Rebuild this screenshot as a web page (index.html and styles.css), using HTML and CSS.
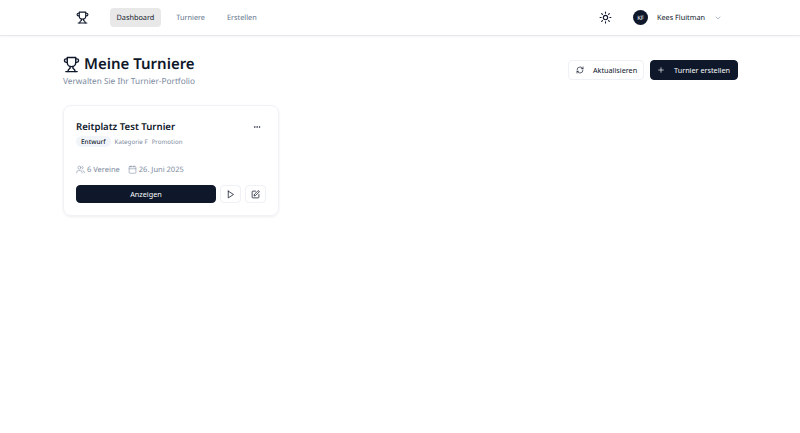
FILE: index.html
```html
<!DOCTYPE html>
<html lang="de">
<head>
<meta charset="utf-8">
<title>Meine Turniere</title>
<link rel="stylesheet" href="styles.css">
</head>
<body>
<header class="topbar">
  <div class="topbar-left">
    <svg class="icon logo" viewBox="0 0 24 24"><path d="M6 9H4.5a2.5 2.5 0 0 1 0-5H6"/><path d="M18 9h1.5a2.5 2.5 0 0 0 0-5H18"/><path d="M4 22h16"/><path d="M10 14.66V17c0 .55-.47.98-.97 1.21C7.85 18.75 7 20.24 7 22"/><path d="M14 14.66V17c0 .55.47.98.97 1.21C16.15 18.75 17 20.24 17 22"/><path d="M18 2H6v7a6 6 0 0 0 12 0V2Z"/></svg>
    <nav class="nav">
      <a class="nav-link active">Dashboard</a>
      <a class="nav-link">Turniere</a>
      <a class="nav-link">Erstellen</a>
    </nav>
  </div>
  <div class="topbar-right">
    <svg class="icon sun" viewBox="0 0 24 24"><circle cx="12" cy="12" r="4"/><path d="M12 2v2M12 20v2M4.93 4.93l1.41 1.41M17.66 17.66l1.41 1.41M2 12h2M20 12h2M6.34 17.66l-1.41 1.41M19.07 4.93l-1.41 1.41"/></svg>
    <div class="user">
      <span class="avatar">KF</span>
      <span class="user-name">Kees Fluitman</span>
      <svg class="icon chevron" viewBox="0 0 24 24"><path d="m6 9 6 6 6-6"/></svg>
    </div>
  </div>
</header>
<main class="page">
  <div class="page-head">
    <div>
      <h1 class="title">
        <svg class="icon title-icon" viewBox="0 0 24 24"><path d="M6 9H4.5a2.5 2.5 0 0 1 0-5H6"/><path d="M18 9h1.5a2.5 2.5 0 0 0 0-5H18"/><path d="M4 22h16"/><path d="M10 14.66V17c0 .55-.47.98-.97 1.21C7.85 18.75 7 20.24 7 22"/><path d="M14 14.66V17c0 .55.47.98.97 1.21C16.15 18.75 17 20.24 17 22"/><path d="M18 2H6v7a6 6 0 0 0 12 0V2Z"/></svg>
        Meine Turniere
      </h1>
      <p class="subtitle">Verwalten Sie Ihr Turnier-Portfolio</p>
    </div>
    <div class="head-actions">
      <button class="btn btn-outline btn-refresh">
        <svg class="icon btn-icon" viewBox="0 0 24 24"><path d="M3 12a9 9 0 0 1 9-9 9.75 9.75 0 0 1 6.74 2.74L21 8"/><path d="M21 3v5h-5"/><path d="M21 12a9 9 0 0 1-9 9 9.75 9.75 0 0 1-6.74-2.74L3 16"/><path d="M8 16H3v5"/></svg>
        Aktualisieren
      </button>
      <button class="btn btn-dark btn-create">
        <svg class="icon btn-icon" viewBox="0 0 24 24"><path d="M5 12h14M12 5v14"/></svg>
        Turnier erstellen
      </button>
    </div>
  </div>
  <section class="card">
    <div class="card-top">
      <h2 class="card-title">Reitplatz Test Turnier</h2>
      <svg class="icon more" viewBox="0 0 24 24"><circle cx="12" cy="12" r="1"/><circle cx="19" cy="12" r="1"/><circle cx="5" cy="12" r="1"/></svg>
    </div>
    <div class="tags">
      <span class="badge">Entwurf</span>
      <span class="tag">Kategorie F</span>
      <span class="tag">Promotion</span>
    </div>
    <div class="meta">
      <span class="meta-item">
        <svg class="icon meta-icon" viewBox="0 0 24 24"><path d="M16 21v-2a4 4 0 0 0-4-4H6a4 4 0 0 0-4 4v2"/><circle cx="9" cy="7" r="4"/><path d="M22 21v-2a4 4 0 0 0-3-3.87"/><path d="M16 3.13a4 4 0 0 1 0 7.75"/></svg>
        6 Vereine
      </span>
      <span class="meta-item">
        <svg class="icon meta-icon" viewBox="0 0 24 24"><rect x="3" y="4" width="18" height="18" rx="2"/><path d="M16 2v4M8 2v4M3 10h18"/></svg>
        26. Juni 2025
      </span>
    </div>
    <div class="card-actions">
      <button class="btn btn-dark btn-wide">Anzeigen</button>
      <button class="btn btn-outline btn-square">
        <svg class="icon square-icon" viewBox="0 0 24 24"><polygon points="6 3 20 12 6 21 6 3"/></svg>
      </button>
      <button class="btn btn-outline btn-square">
        <svg class="icon square-icon" viewBox="0 0 24 24"><path d="M12 3H5a2 2 0 0 0-2 2v14a2 2 0 0 0 2 2h14a2 2 0 0 0 2-2v-7"/><path d="M18.375 2.625a2.121 2.121 0 1 1 3 3L12 15l-4 1 1-4Z"/></svg>
      </button>
    </div>
  </section>
</main>
</body>
</html>
```
FILE: styles.css
```css
* { box-sizing: border-box; }
html, body { margin: 0; padding: 0; }
body {
  background: #fff;
  color: #0f172a;
  font-family: "Noto Sans", "Open Sans", sans-serif;
  text-rendering: geometricPrecision;
  white-space: nowrap;
  height: 433px;
  overflow: hidden;
}
.icon {
  fill: none;
  stroke: currentColor;
  stroke-width: 2;
  stroke-linecap: round;
  stroke-linejoin: round;
  flex: none;
  display: block;
}
.topbar {
  height: 36px;
  padding: 0 78px 0 76px;
  border-bottom: 1px solid #e5e7eb;
  box-shadow: 0 1px 2px rgba(0,0,0,.04);
  display: flex;
  align-items: center;
  justify-content: space-between;
}
.topbar-left { display: flex; align-items: center; gap: 21px; }
.logo { width: 13px; height: 13px; }
.nav { display: flex; align-items: center; gap: 9px; }
.nav-link {
  font-size: 7.3px;
  line-height: 18px;
  padding: 1px 6.5px 0;
  border-radius: 4px;
  color: #64748b;
}
.nav-link.active { background: #e8e8e9; color: #0f172a; }
.topbar-right { display: flex; align-items: center; gap: 21px; }
.sun { width: 13px; height: 13px; }
.user { display: flex; align-items: center; }
.avatar {
  width: 15px; height: 15px;
  border-radius: 50%;
  background: #0f172a;
  color: #f8fafc;
  font-size: 6px;
  display: flex; align-items: center; justify-content: center;
}
.user-name { font-size: 7.25px; margin-left: 9px; color: #0f172a; }
.chevron { width: 8px; height: 8px; margin-left: 9px; color: #64748b; stroke-width: 1.5; }
.page { padding: 16px 62px 0 63px; }
.page-head {
  display: flex;
  justify-content: space-between;
  align-items: center;
  margin-bottom: 17px;
}
.title {
  margin: 0;
  font-size: 15px;
  font-weight: 600;
  line-height: 24px;
  display: flex;
  align-items: center;
  gap: 4px;
}
.title-icon { width: 17px; height: 17px; }
.subtitle { margin: 0; font-size: 8.25px; line-height: 12px; color: #7c8aa0; }
.head-actions { display: flex; gap: 6px; }
.btn {
  font-family: inherit;
  font-size: 7.25px;
  height: 20px;
  border-radius: 4px;
  border: 1px solid #eef1f5;
  display: inline-flex;
  align-items: center;
  justify-content: center;
  gap: 9px;
  cursor: pointer;
}
.btn-refresh { width: 76px; padding: 0 6px 0 7px; }
.btn-create { width: 88px; padding: 0 7px 0 6px; }
.btn-outline { background: #fff; color: #0f172a; }
.btn-dark { background: #0f172a; color: #f8fafc; border-color: #0f172a; }
.btn-icon { width: 8px; height: 8px; }
.card {
  width: 216px;
  height: 111px;
  border: 1px solid #f0f2f6;
  border-radius: 8px;
  box-shadow: 0 1px 3px rgba(0,0,0,.07);
  padding: 13px 12px 12px;
  display: flex;
  flex-direction: column;
}
.card-top { display: flex; align-items: center; justify-content: space-between; padding-right: 5px; }
.card-title { margin: 0; font-size: 9.6px; font-weight: 600; line-height: 16px; }
.more { width: 8px; height: 8px; }
.tags { display: flex; align-items: center; margin-top: 1px; }
.badge {
  background: #f1f5f9;
  font-size: 6.5px;
  font-weight: 500;
  line-height: 11px;
  padding: 0 5px;
  border-radius: 6px;
  margin-right: 4px;
}
.tag { font-size: 6.2px; color: #7c8aa0; margin-right: 4px; }
.meta { display: flex; gap: 8px; margin-top: 18px; }
.meta-item { display: flex; align-items: center; gap: 2px; font-size: 7.5px; color: #7c8aa0; line-height: 11px; }
.meta-icon { width: 9px; height: 9px; stroke-width: 1.5; margin-bottom: 2px; }
.card-actions { display: flex; gap: 4px; margin-top: 9px; }
.btn-wide { flex: 1; height: 18px; }
.btn-square { width: 21px; height: 18px; padding: 0; flex: none; }
.square-icon { width: 9px; height: 9px; }
```
